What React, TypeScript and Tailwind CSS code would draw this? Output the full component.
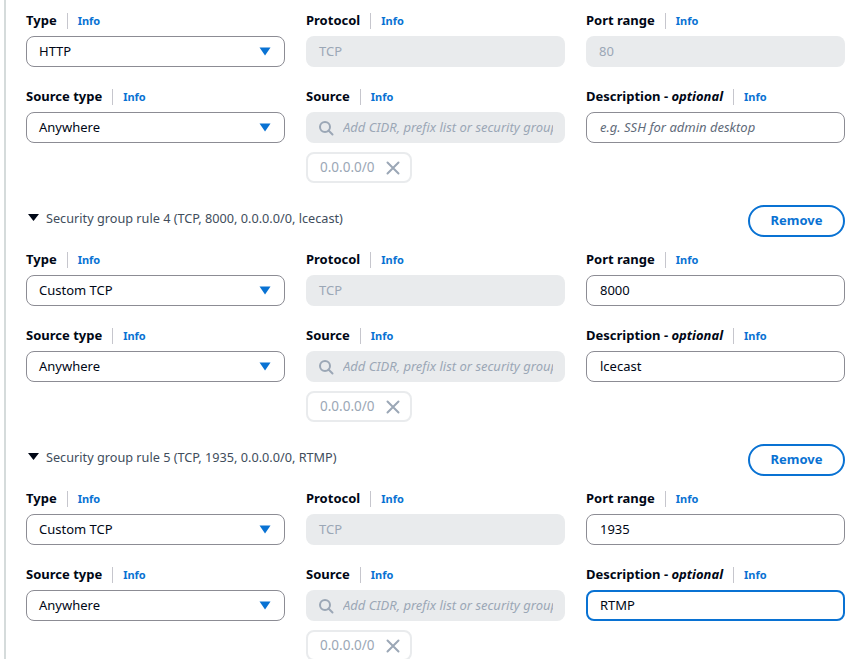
import React from "react";

const Caret = () => (
  <svg width="12" height="9" viewBox="0 0 12 9" className="shrink-0">
    <path d="M0.5 0.5 L11.5 0.5 L6 8.5 Z" fill="#0972d3" />
  </svg>
);

const Label = ({ text, optional }: { text: string; optional?: boolean }) => (
  <div className="flex items-center h-[20px] mb-[5px]">
    <span className="text-[13px] font-bold text-[#000716]">
      {text}
      {optional && (
        <>
          {" - "}
          <i>optional</i>
        </>
      )}
    </span>
    <span className="mx-[10px] h-[16px] w-px bg-[#c6c6cd]" />
    <span className="text-[11px] font-bold text-[#0972d3]">Info</span>
  </div>
);

const Select = ({ value }: { value: string }) => (
  <div className="flex items-center justify-between h-[31px] rounded-[8px] border border-[#8c8c94] pl-[12px] pr-[13px] text-[13px] text-[#000716]">
    <span>{value}</span>
    <Caret />
  </div>
);

const Disabled = ({ value }: { value: string }) => (
  <div className="flex items-center h-[31px] rounded-[8px] bg-[#e9ebed] px-[13px] text-[13px] text-[#9ba7b6]">
    {value}
  </div>
);

const TextInput = ({
  value,
  placeholder,
  focused,
}: {
  value?: string;
  placeholder?: string;
  focused?: boolean;
}) => (
  <div
    className={
      focused
        ? "flex items-center h-[31px] rounded-[8px] border-2 border-[#0972d3] px-[12px] text-[13px] text-[#000716]"
        : "flex items-center h-[31px] rounded-[8px] border border-[#8c8c94] px-[13px] text-[13px] text-[#000716]"
    }
  >
    {value ? (
      <span>{value}</span>
    ) : (
      <span className="italic text-[#5f6b7a]">{placeholder}</span>
    )}
  </div>
);

const SourceField = () => (
  <div>
    <div className="flex items-center h-[31px] rounded-[8px] bg-[#e9ebed] pl-[12px] overflow-hidden whitespace-nowrap">
      <svg width="16" height="16" viewBox="0 0 16 16" className="shrink-0">
        <circle cx="7" cy="7" r="5" fill="none" stroke="#9ba7b6" strokeWidth="2" />
        <path d="M10.5 10.5 L14.5 14.5" stroke="#9ba7b6" strokeWidth="2" strokeLinecap="round" />
      </svg>
      <span className="ml-[9px] text-[13px] italic text-[#9ba7b6] overflow-hidden w-[210px]">
        Add CIDR, prefix list or security group
      </span>
    </div>
    <div className="mt-[9px] inline-flex items-center h-[31px] rounded-[8px] border-2 border-[#e9ebed] pl-[12px] pr-[10px] text-[13.5px] text-[#9ba7b6]">
      <span>0.0.0.0/0</span>
      <svg width="14" height="14" viewBox="0 0 14 14" className="ml-[11px]">
        <path d="M1.5 1.5 L12.5 12.5 M12.5 1.5 L1.5 12.5" stroke="#9ba7b6" strokeWidth="2" strokeLinecap="round" />
      </svg>
    </div>
  </div>
);

type Rule = {
  type: string;
  port: string;
  portDisabled?: boolean;
  desc?: string;
  focused?: boolean;
};

const Fields = ({ rule }: { rule: Rule }) => (
  <div className="grid grid-cols-3 gap-x-[21px] w-[819px]">
    <div>
      <Label text="Type" />
      <Select value={rule.type} />
    </div>
    <div>
      <Label text="Protocol" />
      <Disabled value="TCP" />
    </div>
    <div>
      <Label text="Port range" />
      {rule.portDisabled ? <Disabled value={rule.port} /> : <TextInput value={rule.port} />}
    </div>
    <div className="mt-[20px]">
      <Label text="Source type" />
      <Select value="Anywhere" />
    </div>
    <div className="mt-[20px]">
      <Label text="Source" />
      <SourceField />
    </div>
    <div className="mt-[20px]">
      <Label text="Description" optional />
      <TextInput
        value={rule.desc}
        placeholder="e.g. SSH for admin desktop"
        focused={rule.focused}
      />
    </div>
  </div>
);

const Header = ({ title }: { title: string }) => (
  <div className="flex items-center justify-between w-[819px] mt-[22px] mb-[13px]">
    <div className="flex items-center">
      <svg width="11" height="8" viewBox="0 0 11 8" className="ml-[2px] mr-[7px] -mt-[6px]">
        <path d="M0 0 L11 0 L5.5 7 Z" fill="#000716" />
      </svg>
      <span className="text-[12.7px] text-[#414d5c] -mt-[5px]">{title}</span>
    </div>
    <button className="h-[32px] w-[97px] rounded-full border-2 border-[#0972d3] text-[13px] font-bold text-[#0972d3]">
      Remove
    </button>
  </div>
);

export default function App() {
  return (
    <div
      className="w-[863px] h-[659px] overflow-hidden bg-white"
      style={{ fontFamily: '"Noto Sans", "Open Sans", sans-serif' }}
    >
      <div className="ml-[4px] border-l-2 border-[#d5dbdb] pl-[20px] pt-[11px] min-h-[659px]">
        <Fields rule={{ type: "HTTP", port: "80", portDisabled: true }} />
        <Header title="Security group rule 4 (TCP, 8000, 0.0.0.0/0, lcecast)" />
        <Fields rule={{ type: "Custom TCP", port: "8000", desc: "lcecast" }} />
        <Header title="Security group rule 5 (TCP, 1935, 0.0.0.0/0, RTMP)" />
        <Fields rule={{ type: "Custom TCP", port: "1935", desc: "RTMP", focused: true }} />
      </div>
    </div>
  );
}
